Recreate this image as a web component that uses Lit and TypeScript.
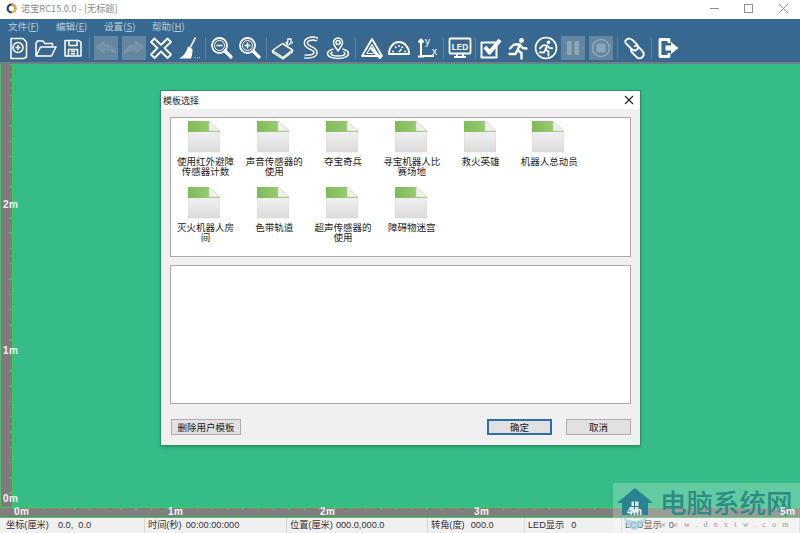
import { LitElement, html, css, svg } from "lit";
import { customElement } from "lit/decorators.js";

const runner = svg`<circle cx="15.5" cy="4.5" r="2.4" fill="#fff" stroke="none"/><path d="M4 12.5 L8 8.5 L14 8.5 L11.5 14 L15.5 17 L15.5 22.5 M11.5 14 L9.5 18 L3.5 18 M14 9 L16.5 12 L20.5 12.5" stroke-width="2.4" stroke-linecap="round" stroke-linejoin="round"/>`;

type Item = { i: unknown; off?: boolean } | { sep: "" | "thin" };

const items: Item[] = [
  { i: svg`<path d="M5 2.5H17L20.5 6V21L17.5 22.5H5Z"/><circle cx="12" cy="11.5" r="5"/><path d="M9.5 11.5H14.5M12 9V14"/>` },
  { i: svg`<path d="M3 20V7.5L4.5 5H10L12 7.5H19.5V10.5M3 20H18.5L23 11H7.5L3 20Z"/>` },
  { i: svg`<path d="M4 4.5H18L20 6.5V20H4Z"/><path d="M8 4.5V9.5H16V4.5M7.5 20V13.5H16.5V20M10 15.5H14M10 17.8H14"/>` },
  { sep: "" },
  { off: true, i: svg`<path d="M2.5 11L10 5.5V9C16 9 20 12 21.5 17C18 14 14.5 13.3 10 13.5V16.5Z"/>` },
  { off: true, i: svg`<path d="M21.5 11L14 5.5V9C8 9 4 12 2.5 17C6 14 9.5 13.3 14 13.5V16.5Z"/>` },
  { i: svg`<path d="M5.5 2.5L12 8.8L18.5 2.5L22 6L15.5 12L22 18.5L18.5 22L12 15.5L5.5 22L2 18.5L8.5 12L2 6Z" stroke-width="1.8"/>` },
  { i: svg`<path d="M18.5 1.5L13 12" stroke-width="1.6"/><path d="M11 10.5L15.5 13C15.5 17 15 20 14 22.5H2C6 21 9.5 16 11 10.5Z" fill="#fff" stroke="none"/><path d="M17.5 21.5h.8M20 22h.8M22 21.5h.8" stroke-width="1.2"/>` },
  { sep: "" },
  { i: svg`<circle cx="9.5" cy="9.5" r="7.5" stroke-width="1.8"/><circle cx="9.5" cy="9.5" r="5" stroke-width="1"/><path d="M6.5 9.5H12.5" stroke-width="1.6"/><path d="M15 15L21 21" stroke-width="3.2" stroke-linecap="round"/>` },
  { i: svg`<circle cx="9.5" cy="9.5" r="7.5" stroke-width="1.8"/><circle cx="9.5" cy="9.5" r="5" stroke-width="1"/><path d="M6.5 9.5H12.5M9.5 6.5V12.5" stroke-width="1.6"/><path d="M15 15L21 21" stroke-width="3.2" stroke-linecap="round"/>` },
  { sep: "" },
  { i: svg`<path d="M1.5 14.5L11.5 7.5L21.5 14L12 21.5Z"/><path d="M1.5 14.5V16.5L12 23L21.5 16V14M12 21.5V23" stroke-width="1.2"/><path d="M17 9L15 6.5H16.8V3H20V6.5H21.5Z" stroke-width="1.3"/>` },
  { i: svg`<path d="M18.5 3.5C12 1 6 4 7 8C8 12 16 12 16.5 16C17 20 11 21 5.5 20.5" stroke-width="4.4"/><path d="M18.5 3.5C12 1 6 4 7 8C8 12 16 12 16.5 16C17 20 11 21 5.5 20.5" stroke="#38688f" stroke-width="1.6"/>` },
  { i: svg`<path d="M12 15C9 10.5 7.5 9 7.5 6.5A4.5 4.5 0 0 1 16.5 6.5C16.5 9 15 10.5 12 15Z"/><circle cx="12" cy="6.5" r="2"/><path d="M7.5 13C3.5 14 1.5 15.5 1.5 17.5C1.5 20.5 6 22.5 12 22.5C18 22.5 22.5 20.5 22.5 17.5C22.5 15.5 20.5 14 16.5 13M6.5 16C5.3 16.5 5 17 5 17.5C5 19 8 20 12 20C16 20 19 19 19 17.5C19 17 18.7 16.5 17.5 16"/>` },
  { sep: "" },
  { i: svg`<path d="M12 3L22 20H2Z" stroke-width="1.8"/><path d="M12 8.5L17 17.5H7Z" stroke-width="1.1"/><path d="M11.5 12.5L20 21.5" stroke-width="3" stroke-linecap="round"/>` },
  { i: svg`<path d="M2 18C2 11 6.5 6 12 6C17.5 6 22 11 22 18Z" stroke-width="1.9"/><path d="M5 15.5H7M8 10.5L9.5 12M12 9V11M16 10.5L14.5 12M17 15.5H19M12 16L14.5 13" stroke-width="1.4"/>` },
  { i: svg`<path d="M6 4V20H19M3.5 6.5L6 3.5L8.5 6.5M3 20.5H9" stroke-width="2"/><text x="10" y="9" class="svgt" font-size="10" fill="#fff" stroke="none">y</text><text x="17" y="19" class="svgt" font-size="10" fill="#fff" stroke="none">x</text>` },
  { sep: "" },
  { i: svg`<rect x="1.5" y="2.5" width="21" height="15" rx="1" stroke-width="1.8"/><text x="12" y="13.5" class="svgt" font-size="8.2" font-weight="700" text-anchor="middle" fill="#fff" stroke="none">LED</text><path d="M9 17.5V20.5M15 17.5V20.5M6 21H18" stroke-width="1.8"/>` },
  { sep: "thin" },
  { i: svg`<path d="M2.5 6.5H17.5V21.5H2.5Z" stroke-width="2"/><path d="M6 11L10.5 16.5L21 4" stroke-width="4"/>` },
  { i: runner },
  { i: svg`<circle cx="12" cy="12" r="10.5" stroke-width="1.6"/><g transform="translate(3 3) scale(.74)">${runner}</g>` },
  { off: true, i: svg`<rect x="6" y="5" width="4.6" height="14" fill="#8ea6b9" stroke="none"/><rect x="13.4" y="5" width="4.6" height="14" fill="#8ea6b9" stroke="none"/>` },
  { off: true, i: svg`<circle cx="12" cy="12" r="8.5" style="fill:none" stroke="#8ea6b9" stroke-width="1.6"/><rect x="7.5" y="7.5" width="9" height="9" rx="1.5" fill="#8ea6b9" stroke="none"/>` },
  { sep: "" },
  { i: svg`<path d="M4 4C6.5 1.5 9 2.5 11 4.5L14.5 8C16.5 10 16.5 12 15 13.5C13.5 15 11 14.5 9 12.5L5 8.5C3 6.5 2.5 5.5 4 4Z" stroke-width="1.8"/><path d="M12 10.5L15 9.5L19.5 14C22 16.5 22.5 19 20.5 21C18.5 23 16 22.5 14 20.5L10.5 17C9 15.5 8.5 14.5 9 12.5" stroke-width="1.8"/>` },
  { sep: "" },
  { i: svg`<path d="M13 7V3.5H4V20.5H13V17" stroke-width="2.8"/><path d="M9.5 9.5H15V6L22.5 12L15 18V14.5H9.5Z" fill="#fff" stroke="none"/>` },
];

const templates = [
  "使用红外避障传感器计数", "声音传感器的使用", "夺宝奇兵", "寻宝机器人比赛场地", "救火英雄", "机器人总动员",
  "灭火机器人房间", "色带轨道", "超声传感器的使用", "障碍物迷宫",
];

const status = [
  { w: 145, gap: 9, a: "坐标(厘米)", b: "0.0,  0.0" },
  { w: 142, gap: 4, a: "时间(秒)", b: "00:00:00:000" },
  { w: 141, gap: 3, a: "位置(厘米)", b: "000.0,000.0" },
  { w: 97, gap: 6, a: "转角(度)", b: "000.0" },
  { w: 97, gap: 7, a: "LED显示", b: "0" },
  { w: 178, gap: 7, a: "LCD显示", b: "0" },
];

@customElement("app-root")
export class AppRoot extends LitElement {
  static styles = css`
    :host { display: block; width: 800px; height: 533px; overflow: hidden; position: relative;
      font-family: "Noto Sans CJK SC", "Liberation Sans", sans-serif; }
    .app { display: flex; flex-direction: column; height: 533px; }
    .title { background: #fff; display: flex; align-items: center; padding: 0 0 3px 6px; height: 16px; }
    .logo { width: 11px; height: 11px; margin-right: 4px; flex: none; }
    .title span { font-size: 9.2px; color: #8a8a8a; white-space: nowrap; }
    .ctrls { margin-left: auto; display: flex; }
    .ctrls svg { width: 34px; height: 14px; display: block; fill: none; stroke: #909090; stroke-width: 1; }
    .menu { height: 14px; background: #376a92; display: flex; gap: 19px; padding: 0 0 0 8px; align-items: center; }
    .menu span { font-size: 9.6px; color: #b9cbd9; white-space: nowrap; width: 29px; }
    .menu u { text-underline-offset: 1px; }
    .bar { height: 29px; background: #38688f; display: flex; align-items: center; padding-left: 4px; border-bottom: 2px solid #6f7f88; }
    .btn { width: 27.5px; height: 29px; display: flex; align-items: center; justify-content: center; flex: none; }
    .btn svg { width: 24px; height: 24px; fill: none; stroke: #fff; stroke-width: 1.5; stroke-linejoin: round; display: block; }
    .btn.off svg { background: #64869f; stroke: #7c97ac; }
    .btn.off svg path { fill: #7490a7; }
    .svgt { font-family: "Liberation Sans", sans-serif; }
    .sep { width: 6px; height: 22px; flex: none; display: flex; justify-content: center; }
    .sep.thin { width: 3px; }
    .sep i { width: 1px; background: #5b83a3; display: block; }
    .work { flex: 1; min-height: 0; display: flex; flex-direction: column; background: #36bd87; }
    .upper { flex: 1; display: flex; min-height: 0; }
    .vr { background:
        repeating-linear-gradient(180deg, #4fb866 0 1.5px, transparent 1.5px 15.3px) right top / 3px 100% no-repeat,
        #82797f;
      border-left: 1px solid #4fc070; border-right: 1px solid #3ec95c; box-sizing: border-box; width: 13px; position: relative; flex: none; }
    .plot { flex: 1; }
    .hr { height: 9px; background:
        repeating-linear-gradient(90deg, #4fb866 0 1.5px, transparent 1.5px 15.3px) 13px 0 / 100% 2px no-repeat,
        #7f7f7f;
      border-top: 1px solid #3ec95c; border-bottom: 1px solid #3ec95c; position: relative; flex: none; }
    .lbl { position: absolute; font: 700 10px/12px "Liberation Sans", sans-serif; letter-spacing: .4px; color: #f4f4f4; white-space: nowrap; z-index: 2; }
    .hr .lbl { top: -2px; }
    .status { height: 15px; background: #f0f0f0; display: flex; flex: none; }
    .cell { box-sizing: border-box; font-size: 9.2px; line-height: 15px; padding-left: 3px; color: #333; white-space: pre; border-right: 1px solid #d8d8d8; display: flex; font-family: "Liberation Sans", "Noto Sans CJK SC", sans-serif; }
    .cell:first-child { padding-left: 6px; }
    .dialog { position: absolute; left: 161px; top: 91px; width: 479px; height: 354px; background: #f0f0f0; box-shadow: 0 0 0 1px #2b8f6c, 0 2px 4px rgba(0,0,0,.25); display: flex; flex-direction: column; z-index: 3; }
    .dh { height: 18px; background: #fff; display: flex; align-items: center; justify-content: space-between; padding: 0 5px 0 2px; flex: none; }
    .dh span { font-size: 9px; color: #222; }
    .dh svg { width: 12px; height: 12px; fill: none; stroke: #222; stroke-width: 1.1; display: block; }
    .db { flex: 1; display: flex; flex-direction: column; padding: 8px 9px 10px 9px; }
    .box { border: 1px solid #a8a8a8; background: #fff; box-sizing: border-box; }
    .box.list { height: 140px; display: grid; grid-template-columns: repeat(6, 68.8px); grid-auto-rows: 66px; padding-top: 3px; align-content: start; }
    .box.blank { height: 139px; margin-top: 8px; }
    .tpl { display: flex; flex-direction: column; align-items: center; }
    .tpl svg { width: 32px; height: 32px; display: block; flex: none; margin-right: 2px; }
    .tpl span { font-size: 9.5px; line-height: 10px; color: #222; text-align: center; width: 62px; margin-top: 3px; }
    .foot { display: flex; margin-top: 15px; padding-left: 1px; }
    .b { box-sizing: border-box; height: 16px; background: #e1e1e1; border: 1px solid #adadad; font-size: 9.5px; line-height: 14px; color: #222; text-align: center; width: 65px; }
    .b.del { width: 70px; margin-right: auto; }
    .b.ok { border: 2px solid #2a6fb0; line-height: 12px; margin-right: 14px; }
    .wm { position: absolute; left: 613px; top: 483px; right: 0; bottom: 0; background: rgba(255,255,255,.22); z-index: 1; }
    .wm svg { position: absolute; left: 4px; top: 4px; width: 36px; height: 44px; }
    .wt { position: absolute; left: 47px; top: 1px; font-size: 26.5px; line-height: 36px; color: #2c8c84; font-weight: 500; white-space: nowrap; }
    .ww { position: absolute; left: 47px; top: 36px; font: 8px/12px "Liberation Serif", serif; letter-spacing: 6.2px; color: #9a9a9a; white-space: nowrap; }
  `;

  render() {
    return html`
      <div class="app">
        <div class="title">
          <svg class="logo" viewBox="0 0 12 12"><circle cx="6" cy="6" r="4.2" fill="none" stroke="#3b3b6e" stroke-width="2.4"/><path d="M6 1.8A4.2 4.2 0 0 1 10.2 6" fill="none" stroke="#e9a23b" stroke-width="2.4"/><path d="M10.2 6A4.2 4.2 0 0 1 6 10.2" fill="none" stroke="#d8c93a" stroke-width="2.4"/></svg>
          <span>诺宝RC15.0.0 - [无标题]</span>
          <div class="ctrls">
            <svg viewBox="0 0 34 14"><path d="M12 7.5H21"/></svg>
            <svg viewBox="0 0 34 14"><rect x="12.5" y="3.5" width="8" height="8"/></svg>
            <svg viewBox="0 0 34 14"><path d="M13 3L22 12M22 3L13 12"/></svg>
          </div>
        </div>
        <div class="menu">
          <span>文件(<u>F</u>)</span><span>编辑(<u>E</u>)</span><span>设置(<u>S</u>)</span><span>帮助(<u>H</u>)</span>
        </div>
        <div class="bar">
          ${items.map((it) =>
            "sep" in it
              ? html`<div class="sep ${it.sep}"><i></i></div>`
              : html`<div class="btn ${it.off ? "off" : ""}"><svg viewBox="0 0 24 24">${it.i}</svg></div>`
          )}
        </div>
        <div class="work">
          <div class="upper">
            <div class="vr">
              <span class="lbl" style="left:2px;top:135px">2m</span>
              <span class="lbl" style="left:2px;top:281px">1m</span>
              <span class="lbl" style="left:2px;top:429px">0m</span>
            </div>
            <div class="plot"></div>
          </div>
          <div class="hr">
            <span class="lbl" style="left:14px">0m</span>
            <span class="lbl" style="left:168px">1m</span>
            <span class="lbl" style="left:320px">2m</span>
            <span class="lbl" style="left:474px">3m</span>
            <span class="lbl" style="left:627px">4m</span>
            <span class="lbl" style="left:780px">5m</span>
          </div>
          <div class="status">
            ${status.map(
              (s) => html`<div class="cell" style="width:${s.w}px"><span style="margin-right:${s.gap}px">${s.a}</span><span>${s.b}</span></div>`
            )}
          </div>
        </div>
      </div>

      <div class="wm">
        <svg viewBox="0 0 36 44">
          <path d="M18 1L36 16H31V28H5V16H0Z" fill="#2b8290"/>
          <path d="M14 14H22V26H14Z M17.5 14V26 M14 19.5H22" fill="#d8ebe4" stroke="#2b8290" stroke-width="1"/>
          <path d="M6 30C13 35 23 35 30 30C27 38 20 43 17 43C13 42 9 37 6 30Z" fill="#9fd3e0" opacity=".75"/>
        </svg>
        <div class="wt">电脑系统网</div>
        <div class="ww">www.dnxtw.com</div>
      </div>

      <div class="dialog">
        <div class="dh">
          <span>模板选择</span>
          <svg viewBox="0 0 12 12"><path d="M2 2L10 10M10 2L2 10"/></svg>
        </div>
        <div class="db">
          <div class="box list">
            ${templates.map(
              (t) => html`<div class="tpl">
                <svg viewBox="0 0 32 32">
                  <defs>
                    <linearGradient id="g" x1="0" y1="0" x2="0" y2="1"><stop offset="0" stop-color="#fafafa"/><stop offset="1" stop-color="#dcdcdc"/></linearGradient>
                    <linearGradient id="t" x1="0" y1="0" x2="1" y2="0"><stop offset="0" stop-color="#7fbb58"/><stop offset="1" stop-color="#a5d17f"/></linearGradient>
                  </defs>
                  <path d="M0 0H21L32 10V31H0Z" fill="url(#g)" stroke="#d0d0d0" stroke-width=".5"/>
                  <path d="M0 0H21V10H32V11H0Z" fill="url(#t)"/>
                  <path d="M21 0L32 10H21Z" fill="#eef2ea" stroke="#c4c9c0" stroke-width=".5"/>
                </svg>
                <span>${t}</span>
              </div>`
            )}
          </div>
          <div class="box blank"></div>
          <div class="foot">
            <div class="b del">删除用户模板</div>
            <div class="b ok">确定</div>
            <div class="b">取消</div>
          </div>
        </div>
      </div>
    `;
  }
}
